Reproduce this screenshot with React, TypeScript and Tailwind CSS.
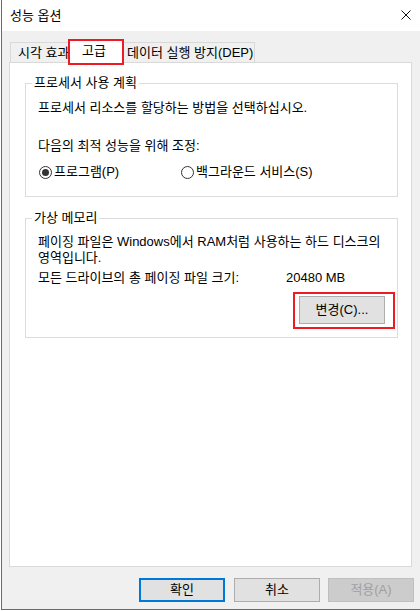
const font = "font-['Liberation_Sans','Noto_Sans_CJK_KR',sans-serif]";

function Radio({ checked, label }: { checked?: boolean; label: string }) {
  return (
    <label className="flex items-center gap-[2px]">
      <span className="flex h-[13px] w-[13px] items-center justify-center rounded-full border border-[#333333] bg-white">
        {checked && <span className="h-[7px] w-[7px] rounded-full bg-[#333333]" />}
      </span>
      <span>{label}</span>
    </label>
  );
}

function Group({ title, className, children }: { title: string; className?: string; children: React.ReactNode }) {
  return (
    <div className={"w-[373px] border border-[#dcdcdc] " + (className ?? "")}>
      <div className="-mt-[9px] ml-[6px] w-fit bg-white px-[2px] leading-[16px]">{title}</div>
      {children}
    </div>
  );
}

const App = () => {
  return (
    <div className={`h-[611px] w-[420px] overflow-hidden bg-white text-[13px] leading-[16px] text-black ${font}`}>
      <div className="ml-px flex h-[610px] w-[419px] flex-col border-b border-l border-[#6b6b6b] bg-[#f0f0f0]">
        {/* title bar */}
        <div className="flex h-[31px] items-center justify-between bg-white pl-[8px] pr-[9px]">
          <span>성능 옵션</span>
          <svg width="10" height="10" viewBox="0 0 10 10" className="mt-[-2px]">
            <path d="M0.5 0.5 L9.5 9.5 M9.5 0.5 L0.5 9.5" stroke="#111" strokeWidth="1" />
          </svg>
        </div>

        <div className="flex flex-1 flex-col pl-[7px] pt-[9px]">
          {/* tabs */}
          <div className="ml-px flex h-[23px] items-end">
            <div className="h-[21px] w-[58px] whitespace-nowrap border-l border-t border-[#d9d9d9] pl-[7px] pt-[2px]">시각 효과</div>
            <div className="relative z-10 h-[23px] w-[55px] border-l border-r border-t border-[#d9d9d9] bg-white pl-[13px] pt-[2px]">
              고급
              <div className="absolute -bottom-[2px] -left-[1px] -right-[2px] -top-[2px] border-2 border-[#ed1c24]" />
            </div>
            <div className="h-[21px] w-[132px] whitespace-nowrap border-r border-t border-[#d9d9d9] pl-[4px] pt-[2px]">데이터 실행 방지(DEP)</div>
          </div>

          {/* tab panel */}
          <div className="-mt-px h-[505px] w-[403px] border border-[#d9d9d9] bg-white px-[15px] pt-[20px]">
            <Group title="프로세서 사용 계획" className="pb-[16px]">
              <p className="mt-[9px] pl-[12px]">프로세서 리소스를 할당하는 방법을 선택하십시오.</p>
              <p className="mt-[22px] pl-[12px]">다음의 최적 성능을 위해 조정:</p>
              <div className="mt-[10px] flex h-[16px] pl-[13px]">
                <div className="w-[142px]">
                  <Radio checked label="프로그램(P)" />
                </div>
                <Radio label="백그라운드 서비스(S)" />
              </div>
            </Group>

            <Group title="가상 메모리" className="mt-[21px] pb-[13px]">
              <p className="mt-[8px] whitespace-nowrap pl-[12px]">
                페이징 파일은 Windows에서 RAM처럼 사용하는 하드 디스크의
                <br />
                영역입니다.
              </p>
              <div className="mt-[4px] flex pl-[12px]">
                <span className="w-[248px]">모든 드라이브의 총 페이징 파일 크기:</span>
                <span>20480 MB</span>
              </div>
              <div className="mt-[10px] flex justify-end pr-[12px]">
                <div className="relative">
                  <button className="flex h-[28px] w-[86px] items-center justify-center border border-[#adadad] bg-[#e1e1e1]">
                    변경(C)...
                  </button>
                  <div className="absolute -bottom-[5px] -left-[6px] -right-[10px] -top-[4px] border-2 border-[#ed1c24]" />
                </div>
              </div>
            </Group>
          </div>

          {/* dialog buttons */}
          <div className="ml-[130px] mt-[11px] flex">
            <button className="flex h-[24px] w-[86px] items-center justify-center border-2 border-[#0078d7] bg-[#e1e1e1]">
              확인
            </button>
            <button className="ml-[9px] flex h-[24px] w-[86px] items-center justify-center border border-[#adadad] bg-[#e1e1e1]">
              취소
            </button>
            <button className="ml-[8px] flex h-[24px] w-[86px] items-center justify-center border border-[#bfbfbf] bg-[#cccccc] text-[#a0a0a0]">
              적용(A)
            </button>
          </div>
        </div>
      </div>
    </div>
  );
};

export default App;
